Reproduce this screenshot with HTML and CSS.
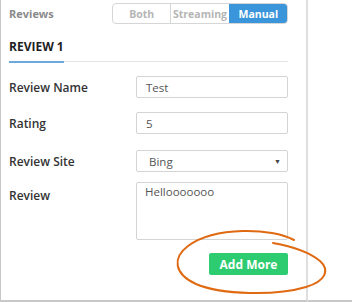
FILE: index.html
```html
<!DOCTYPE html>
<html lang="en">
<head>
    <meta charset="UTF-8">
    <title>Reviews</title>
    <link rel="stylesheet" href="styles.css">
</head>
<body>
    <div class="frame">
        <div class="panel">
            <div class="panel-head">
                <span class="panel-title">Reviews</span>
                <div class="segmented">
                    <span class="seg">Both</span>
                    <span class="seg">Streaming</span>
                    <span class="seg active">Manual</span>
                </div>
            </div>

            <div class="tabs">
                <span class="tab">REVIEW 1</span>
            </div>

            <div class="form-row">
                <label>Review Name</label>
                <div class="field">Test</div>
            </div>
            <div class="form-row">
                <label>Rating</label>
                <div class="field">5</div>
            </div>
            <div class="form-row site">
                <label>Review Site</label>
                <div class="field select">Bing <span class="caret">▼</span></div>
            </div>
            <div class="form-row top">
                <label>Review</label>
                <div class="field area">Hellooooooo</div>
            </div>

            <div class="actions">
                <button class="add-btn">Add More</button>
            </div>
        </div>
        <div class="side"></div>

        <!-- hand drawn highlight -->
        <svg class="circle" width="352" height="302" viewBox="0 0 352 302">
            <path d="M294 240 C 272 228, 215 226, 188 246 C 172 258, 174 274, 196 284 C 222 295, 276 296, 306 287 C 326 281, 330 270, 320 261 C 308 251, 290 246, 273 243"
                  fill="none" stroke="#e06a12" stroke-width="2" stroke-linecap="round"/>
        </svg>
    </div>
</body>
</html>
```

FILE: styles.css
```css
* {
    margin: 0;
    padding: 0;
    box-sizing: border-box;
    font-family: 'Open Sans', sans-serif;
}

body {
    background: #fff;
    width: 352px;
    height: 302px;
    overflow: hidden;
}

.frame {
    position: relative;
    display: flex;
    width: 352px;
    height: 302px;
}

.panel {
    width: 308px;
    height: 302px;
    border-left: 1px solid #c8c8c8;
    border-right: 2px solid #dedede;
    border-bottom: 2px solid #c8c8c8;
    padding: 3px 18px 0 8px;
}

.side {
    flex: 1;
    border-bottom: 2px solid #c8c8c8;
}

.panel-head {
    display: flex;
    align-items: center;
    justify-content: space-between;
    height: 21px;
}

.panel-title {
    font-size: 11px;
    font-weight: 700;
    color: #8a8a8a;
}

.segmented {
    display: flex;
    width: 176px;
    height: 21px;
    border: 1px solid #d6d6d6;
    border-radius: 4px;
    overflow: hidden;
}

.seg {
    flex: 1;
    display: flex;
    align-items: center;
    justify-content: center;
    font-size: 10.5px;
    font-weight: 700;
    color: #b5b5b5;
    border-left: 1px solid #d6d6d6;
}

.seg:first-child {
    border-left: none;
}

.seg.active {
    background: #3a95da;
    color: #fff;
    border-left-color: #3a95da;
}

.tabs {
    margin-top: 10px;
    border-bottom: 1px solid #e4e4e4;
    height: 28px;
}

.tab {
    display: inline-block;
    height: 28px;
    padding-top: 3px;
    font-size: 12px;
    font-weight: 700;
    color: #1e1e1e;
    white-space: nowrap;
    border-bottom: 2px solid #6ea9de;
}

.form-row {
    display: flex;
    align-items: center;
    justify-content: space-between;
    margin-top: 14px;
}

.form-row.site {
    margin-top: 16px;
}

.form-row.top {
    align-items: flex-start;
    margin-top: 10px;
}

.form-row label {
    font-size: 12px;
    font-weight: 600;
    color: #333;
}

.form-row.top label {
    padding-top: 5px;
}

.field {
    width: 152px;
    height: 22px;
    border: 1px solid #d4d4d4;
    border-radius: 2px;
    padding: 2px 9px;
    font-size: 11.5px;
    color: #555;
    display: flex;
    align-items: center;
}

.field.select {
    padding-left: 12px;
    justify-content: space-between;
}

.caret {
    font-size: 7px;
    color: #444;
    margin-right: -3px;
}

.field.area {
    height: 58px;
    align-items: flex-start;
    padding: 1px 8px;
}

.actions {
    display: flex;
    justify-content: flex-end;
    margin-top: 13px;
}

.add-btn {
    width: 79px;
    height: 22px;
    border: none;
    border-radius: 2px;
    background: #2ecc71;
    color: #fff;
    font-size: 12px;
    font-weight: 700;
}

.circle {
    position: absolute;
    left: 0;
    top: 0;
    pointer-events: none;
}
```
